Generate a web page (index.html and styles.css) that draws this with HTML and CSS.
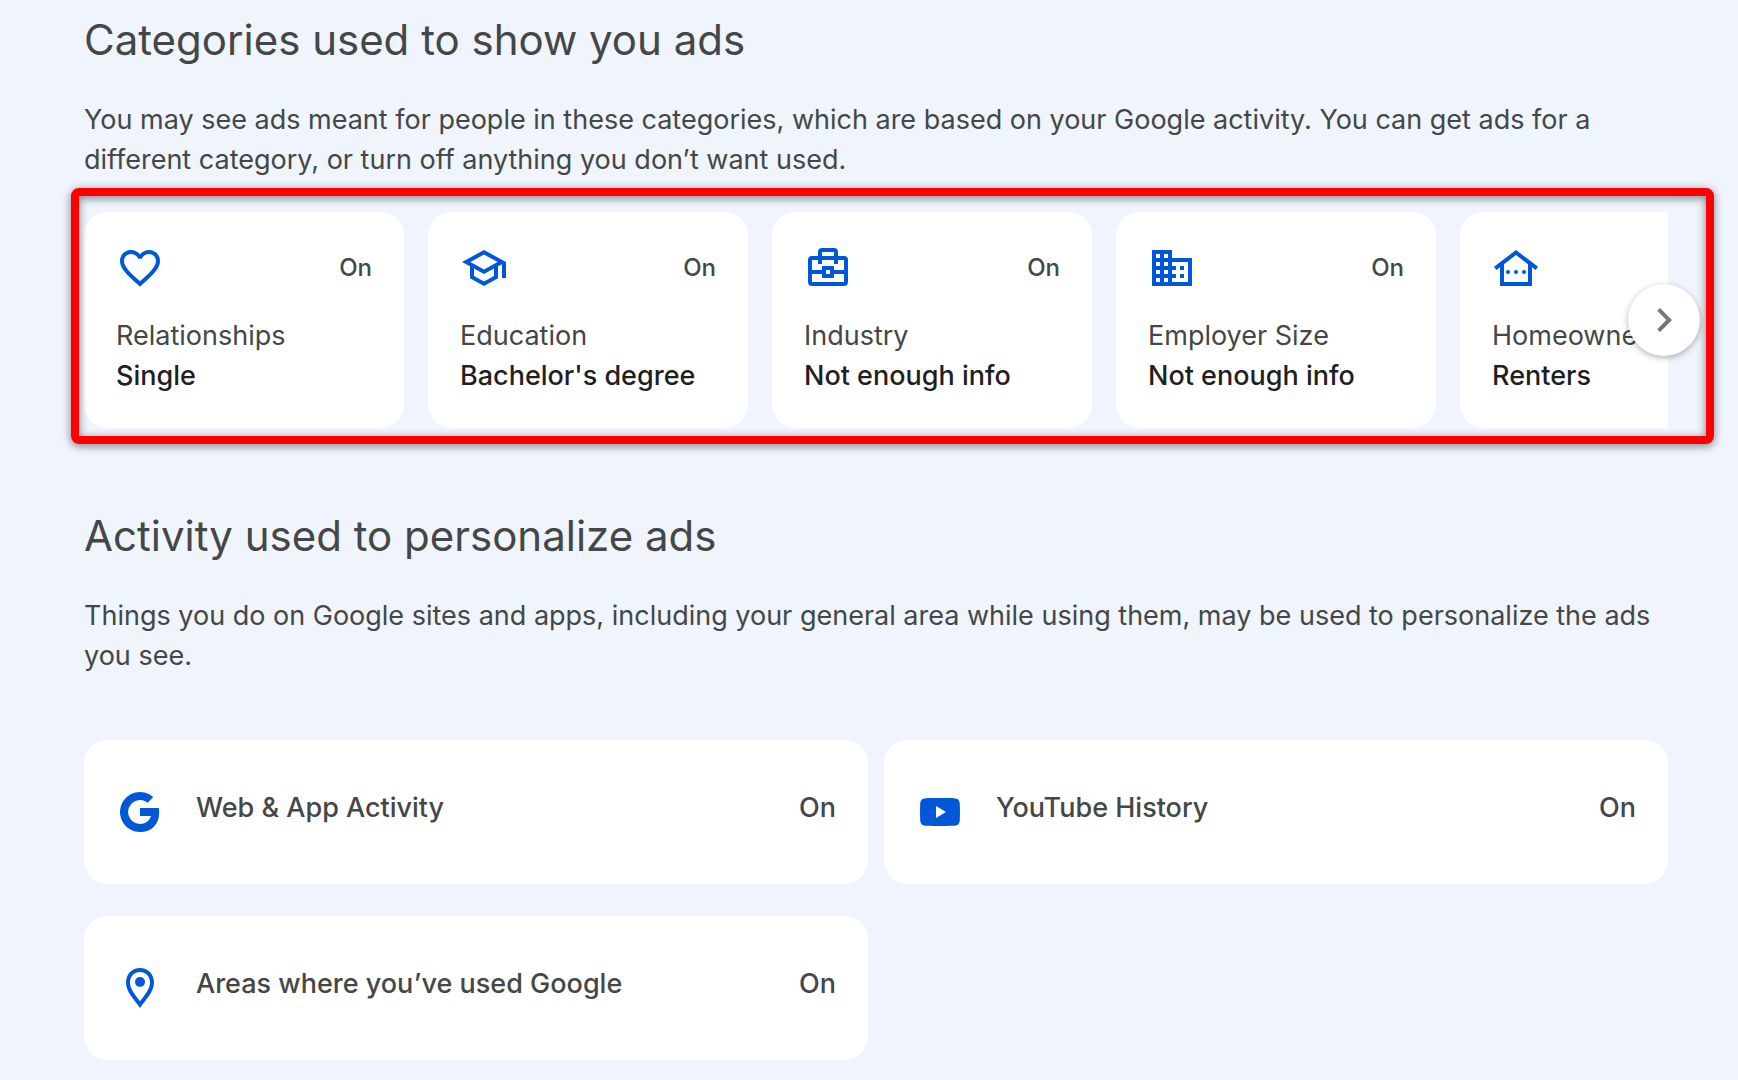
FILE: index.html
```html
<!DOCTYPE html>
<html lang="en">
<head>
  <meta charset="UTF-8">
  <meta name="viewport" content="width=device-width, initial-scale=1.0">
  <title>My Ad Center</title>
  <link rel="stylesheet" href="styles.css">
</head>
<body>

<main class="page">

  <!-- Categories -->
  <section class="section">
    <h2>Categories used to show you ads</h2>
    <p class="intro">You may see ads meant for people in these categories, which are based on your Google activity. You can get ads for a different category, or turn off anything you don’t want used.</p>

    <div class="carousel">
      <div class="track">
        <a class="category" href="#relationships">
          <span class="category-top">
            <svg class="icon" viewBox="0 0 24 24"><path d="M16.5 3c-1.74 0-3.41.81-4.5 2.09C10.91 3.81 9.24 3 7.5 3 4.42 3 2 5.42 2 8.5c0 3.78 3.4 6.86 8.55 11.54L12 21.35l1.45-1.32C18.6 15.36 22 12.28 22 8.5 22 5.42 19.58 3 16.5 3zm-4.4 15.55l-.1.1-.1-.1C7.14 14.24 4 11.39 4 8.5 4 6.5 5.5 5 7.5 5c1.54 0 3.04.99 3.57 2.36h1.87C13.46 5.99 14.96 5 16.5 5c2 0 3.5 1.5 3.5 3.5 0 2.89-3.14 5.74-7.9 10.05z"/></svg>
            <span class="status">On</span>
          </span>
          <span class="name">Relationships</span>
          <span class="value">Single</span>
        </a>

        <a class="category" href="#education">
          <span class="category-top">
            <svg class="icon" viewBox="0 0 24 24"><path d="M12 3L1 9l4 2.18v6L12 21l7-3.82v-6l2-1.09V17h2V9L12 3zm6.82 6L12 12.72 5.18 9 12 5.28 18.82 9zM17 15.99l-5 2.73-5-2.73v-3.72L12 15l5-2.73v3.72z"/></svg>
            <span class="status">On</span>
          </span>
          <span class="name">Education</span>
          <span class="value">Bachelor's degree</span>
        </a>

        <a class="category" href="#industry">
          <span class="category-top">
            <svg class="icon" viewBox="0 0 24 24"><path fill-rule="evenodd" d="M9 2h6a2 2 0 0 1 2 2v2h3a2 2 0 0 1 2 2v11a2 2 0 0 1-2 2H4a2 2 0 0 1-2-2V8a2 2 0 0 1 2-2h3V4a2 2 0 0 1 2-2zm0 2v2h6V4H9zM4 8v5h5v-2h6v2h5V8h-3v2h-2V8H9v2H7V8H4zm0 7v4h16v-4h-5v2H9v-2H4zm7-2v2h2v-2h-2z"/></svg>
            <span class="status">On</span>
          </span>
          <span class="name">Industry</span>
          <span class="value">Not enough info</span>
        </a>

        <a class="category" href="#employer-size">
          <span class="category-top">
            <svg class="icon" viewBox="0 0 24 24"><path d="M12 7V3H2v18h20V7H12zM6 19H4v-2h2v2zm0-4H4v-2h2v2zm0-4H4V9h2v2zm0-4H4V5h2v2zm4 12H8v-2h2v2zm0-4H8v-2h2v2zm0-4H8V9h2v2zm0-4H8V5h2v2zm10 12h-8v-2h2v-2h-2v-2h2v-2h-2V9h8v10zm-2-8h-2v2h2v-2zm0 4h-2v2h2v-2z"/></svg>
            <span class="status">On</span>
          </span>
          <span class="name">Employer Size</span>
          <span class="value">Not enough info</span>
        </a>

        <a class="category" href="#homeownership">
          <span class="category-top">
            <svg class="icon" viewBox="0 0 24 24"><path d="M12 3L1 11.4l1.21 1.59L4 11.62V21h16v-9.38l1.79 1.36L23 11.4 12 3zm6 16H6v-8.9l6-4.58 6 4.58V19z"/><circle cx="8" cy="14" r="1"/><circle cx="12" cy="14" r="1"/><circle cx="16" cy="14" r="1"/></svg>
            <span class="status">On</span>
          </span>
          <span class="name">Homeownership</span>
          <span class="value">Renters</span>
        </a>
      </div>

      <button type="button" class="next" aria-label="Next">
        <svg viewBox="0 0 24 24"><path d="M10 6L8.59 7.41 13.17 12l-4.58 4.59L10 18l6-6z"/></svg>
      </button>
      <div class="highlight"></div>
    </div>
  </section>

  <!-- Activity -->
  <section class="section">
    <h2>Activity used to personalize ads</h2>
    <p class="intro">Things you do on Google sites and apps, including your general area while using them, may be used to personalize the ads you see.</p>

    <div class="activities">
      <a class="activity" href="#web-app">
        <svg class="icon" viewBox="0 0 24 24"><path d="M18.6 4.5A10 10 0 1 0 12 22c5.8 0 9.6-4 9.6-9.8 0-.8-.1-1.5-.2-2.2H12v4h5.5c-.7 2.4-2.9 4-5.5 4a6 6 0 1 1 3.9-10.6z"/></svg>
        <span class="label">Web &amp; App Activity</span>
        <span class="label">On</span>
      </a>
      <a class="activity" href="#youtube">
        <svg class="icon" viewBox="0 0 24 24"><path fill-rule="evenodd" d="M5 5.1C9 4.97 15 4.97 19 5.1c2 .1 2.8.9 2.9 2.9.13 2.6.13 5.4 0 8-.1 2-.9 2.8-2.9 2.9-4 .13-10 .13-14 0-2-.1-2.8-.9-2.9-2.9-.13-2.6-.13-5.4 0-8 .1-2 .9-2.8 2.9-2.9zM10 9v6l5-3z"/></svg>
        <span class="label">YouTube History</span>
        <span class="label">On</span>
      </a>
      <a class="activity" href="#areas">
        <svg class="icon" viewBox="0 0 24 24"><path fill-rule="evenodd" d="M12 2C8 2 5 5.1 5 9.2 5 14 9 17.5 12 22c3-4.5 7-8 7-12.8C19 5.1 16 2 12 2zm0 2c2.9 0 5 2.2 5 5.2 0 3.2-2.5 6-5 9.4-2.5-3.4-5-6.2-5-9.4C7 6.2 9.1 4 12 4z"/><circle cx="12" cy="9" r="2.5"/></svg>
        <span class="label">Areas where you’ve used Google</span>
        <span class="label">On</span>
      </a>
    </div>
  </section>

</main>

</body>
</html>
```
FILE: styles.css
```css
* {
  box-sizing: border-box;
}

body {
  margin: 0;
  background-color: #eff4fd;
  color: #444746;
  font-family: Inter, "Liberation Sans", sans-serif;
  font-size: 27px;
  line-height: 40px;
}

a {
  color: inherit;
  text-decoration: none;
}

.page {
  padding: 12px 70px 20px 84px;
}

.section + .section {
  margin-top: 80px;
}

h2 {
  margin: 0 0 32px;
  font-size: 42px;
  font-weight: 400;
  line-height: 56px;
}

.intro {
  margin: 0;
}

.icon {
  flex: none;
  width: 48px;
  height: 48px;
  fill: #0057d8;
}

/* category cards */
.carousel {
  position: relative;
  margin-top: 32px;
}

.track {
  display: flex;
  gap: 24px;
  overflow: hidden;
}

.category {
  display: flex;
  flex: none;
  flex-direction: column;
  width: 320px;
  padding: 32px;
  border-radius: 24px;
  background-color: white;
  white-space: nowrap;
}

.category-top {
  display: flex;
  align-items: center;
  justify-content: space-between;
  margin-bottom: 24px;
}

.status {
  font-size: 24px;
  font-weight: 500;
}

.value {
  color: #1f1f1f;
  font-weight: 500;
}

.next {
  position: absolute;
  top: 50%;
  right: -32px;
  width: 72px;
  height: 72px;
  margin-top: -36px;
  padding: 12px;
  border: none;
  border-radius: 50%;
  background-color: white;
  box-shadow: 0 2px 6px rgba(0, 0, 0, 0.3);
  cursor: pointer;
}

.next svg {
  display: block;
  width: 48px;
  height: 48px;
  fill: #747775;
}

.highlight {
  position: absolute;
  inset: -24px -46px -16px -13px;
  border: 8px solid #ff0000;
  border-radius: 8px;
  filter: drop-shadow(0 2px 4px rgba(0, 0, 0, 0.5));
  pointer-events: none;
}

/* activity cards */
.activities {
  display: grid;
  grid-template-columns: 1fr 1fr;
  gap: 32px 16px;
  margin-top: 64px;
}

.activity {
  display: flex;
  align-items: flex-start;
  gap: 32px;
  padding: 48px 32px;
  border-radius: 24px;
  background-color: white;
  font-weight: 500;
}

.activity .label:last-child {
  margin-left: auto;
}
```
